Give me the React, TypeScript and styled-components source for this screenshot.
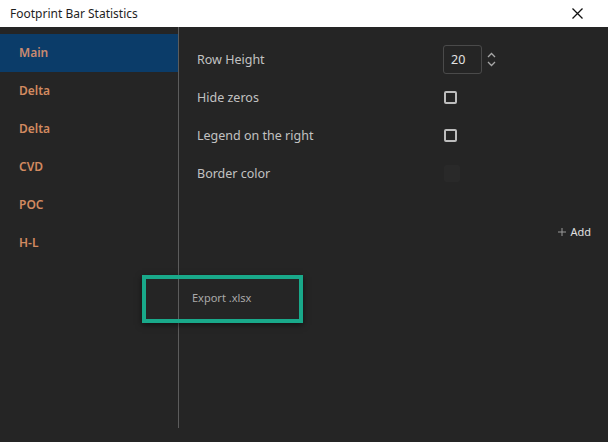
import React from "react";
import styled, { createGlobalStyle } from "styled-components";

const GlobalStyle = createGlobalStyle`
    html, body {
        margin: 0;
        padding: 0;
        background: #252525;
    }
    body {
        font-family: "Noto Sans", "Open Sans", sans-serif;
    }
`;

const Window = styled.div`
    position: relative;
    width: 608px;
    height: 442px;
    display: flex;
    flex-direction: column;
    background: #252525;
    overflow: hidden;
`;

const TitleBar = styled.div`
    height: 27px;
    flex: 0 0 27px;
    display: flex;
    align-items: center;
    justify-content: space-between;
    padding: 0 25px 0 10px;
    background: #ffffff;
    color: #1e1e1e;
    font-size: 12px;
`;

const CloseButton = styled.button`
    border: none;
    background: none;
    padding: 0;
    display: flex;
    cursor: pointer;
`;

const Body = styled.div`
    flex: 1;
    display: flex;
    padding-bottom: 14px;
`;

const Sidebar = styled.nav`
    width: 178px;
    flex: 0 0 178px;
    border-right: 1px solid #5c5c5c;
    padding-top: 7px;
    display: flex;
    flex-direction: column;
`;

const NavItem = styled.div<{ $active?: boolean }>`
    height: 38px;
    display: flex;
    align-items: center;
    padding-left: 19px;
    padding-bottom: 2px;
    box-sizing: border-box;
    font-size: 12px;
    font-weight: 600;
    color: ${({ $active }) => ($active ? "#c98a70" : "#d28a60")};
    background: ${({ $active }) => ($active ? "#0b3c69" : "transparent")};
`;

const Main = styled.div`
    flex: 1;
    display: flex;
    flex-direction: column;
    padding-top: 13px;
`;

const Settings = styled.div`
    display: flex;
    flex-direction: column;
    padding: 0 18px;
`;

const Row = styled.div`
    height: 38px;
    display: flex;
    align-items: center;
`;

const Label = styled.span`
    width: 246px;
    font-size: 12.5px;
    color: #c2c2c2;
`;

const NumberBox = styled.div`
    width: 39px;
    height: 29px;
    box-sizing: border-box;
    border: 1px solid #4a4a4a;
    border-radius: 3px;
    display: flex;
    align-items: center;
    padding-left: 7px;
    font-size: 12.5px;
    color: #e2e2e2;
`;

const Spinner = styled.div`
    margin-left: 5px;
    display: flex;
    flex-direction: column;
    gap: 3px;
`;

const Checkbox = styled.div`
    margin-left: 1px;
    width: 13px;
    height: 13px;
    box-sizing: border-box;
    border: 2px solid #bdbdbd;
    border-radius: 2px;
`;

const Swatch = styled.div`
    margin-left: 1px;
    width: 16px;
    height: 17px;
    border-radius: 2px;
    background: #292929;
`;

const AddRow = styled.div`
    margin-top: 32px;
    display: flex;
    justify-content: flex-end;
    padding-right: 17px;
`;

const AddButton = styled.button`
    border: none;
    background: none;
    padding: 0;
    display: flex;
    align-items: center;
    gap: 4px;
    font-family: inherit;
    font-size: 11px;
    color: #e0e0e0;
    cursor: pointer;
`;

const Footer = styled.div`
    margin-top: 46px;
    padding-left: 13px;
`;

const ExportButton = styled.button`
    border: none;
    background: none;
    padding: 0;
    font-family: inherit;
    font-size: 11px;
    color: #a9a9a9;
    cursor: pointer;
`;

const Highlight = styled.div`
    position: absolute;
    left: 142px;
    top: 275px;
    width: 161px;
    height: 48px;
    box-sizing: border-box;
    border: 4px solid #19a98a;
    box-shadow: 0 2px 6px rgba(0, 0, 0, 0.55);
    pointer-events: none;
`;

const tabs = ["Main", "Delta", "Delta", "CVD", "POC", "H-L"];

const Chevron: React.FC<{ up?: boolean }> = ({ up }) => (
    <svg width="9" height="6" viewBox="0 0 9 6">
        <path
            d={up ? "M1 5 L4.5 1.5 L8 5" : "M1 1 L4.5 4.5 L8 1"}
            fill="none"
            stroke="#a8a8a8"
            strokeWidth="1.3"
        />
    </svg>
);

const App: React.FC = () => {
    return (
        <>
            <GlobalStyle />
            <Window>
                <TitleBar>
                    <span>Footprint Bar Statistics</span>
                    <CloseButton>
                        <svg width="11" height="11" viewBox="0 0 11 11">
                            <path d="M0.5 0.5 L10.5 10.5 M10.5 0.5 L0.5 10.5" stroke="#111" strokeWidth="1.3" />
                        </svg>
                    </CloseButton>
                </TitleBar>
                <Body>
                    <Sidebar>
                        {tabs.map((t, i) => (
                            <NavItem key={i} $active={i === 0}>
                                {t}
                            </NavItem>
                        ))}
                    </Sidebar>
                    <Main>
                        <Settings>
                            <Row>
                                <Label>Row Height</Label>
                                <NumberBox>20</NumberBox>
                                <Spinner>
                                    <Chevron up />
                                    <Chevron />
                                </Spinner>
                            </Row>
                            <Row>
                                <Label>Hide zeros</Label>
                                <Checkbox />
                            </Row>
                            <Row>
                                <Label>Legend on the right</Label>
                                <Checkbox />
                            </Row>
                            <Row>
                                <Label>Border color</Label>
                                <Swatch />
                            </Row>
                        </Settings>
                        <AddRow>
                            <AddButton>
                                <svg width="8" height="8" viewBox="0 0 8 8">
                                    <path d="M4 0 V8 M0 4 H8" stroke="#9a9a9a" strokeWidth="1" />
                                </svg>
                                Add
                            </AddButton>
                        </AddRow>
                        <Footer>
                            <ExportButton>Export .xlsx</ExportButton>
                        </Footer>
                    </Main>
                </Body>
                <Highlight />
            </Window>
        </>
    );
};

export default App;
